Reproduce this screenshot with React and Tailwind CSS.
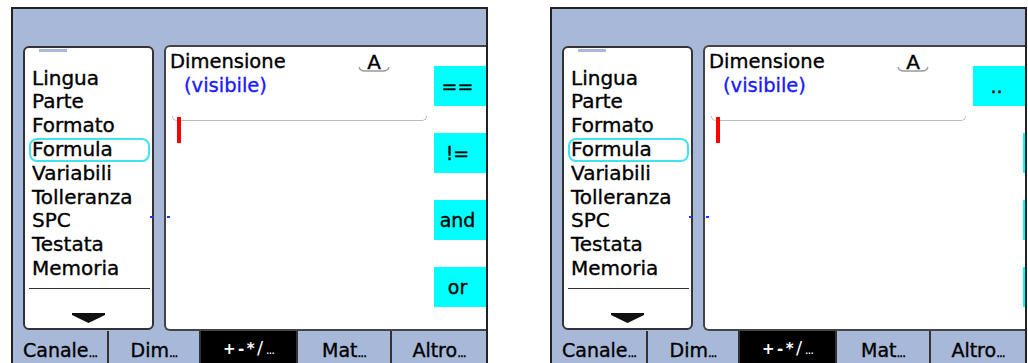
import React from "react";

const FONT = { fontFamily: '"DejaVu Sans", Verdana, sans-serif' };

const MENU = ["Lingua", "Parte", "Formato", "Formula", "Variabili", "Tolleranza", "SPC", "Testata", "Memoria"];

const Tab = ({ label, last }) => (
  <div
    className={`h-full flex justify-center pt-[7px] text-black [-webkit-text-stroke:0.35px_black] ${
      last ? "flex-1" : "border-r-2 border-[#333]"
    }`}
  >
    <span className="text-[19px] leading-[24px]">
      {label}
      <span className="text-[12px] tracking-[-1px]">...</span>
    </span>
  </div>
);

const OpButton = ({ children }) => (
  <div className="w-[52px] h-[40px] bg-[#00ffff] flex items-center justify-center pr-[5px] text-[19px] leading-[24px] text-black [-webkit-text-stroke:0.35px_black]">
    {children}
  </div>
);

const Screen = ({ scrolled }) => (
  <div className="relative w-[477px] h-[370px] border-t-2 border-x-2 border-[#222] bg-[#a8b8d8] flex flex-col shrink-0">
    <div className="h-[36px]" />
    <div className="h-[286px] flex">
      {/* menu list */}
      <div className="ml-[10px] mt-[1px] mb-[1px] w-[131px] bg-white border-2 border-[#333] rounded-[6px] flex flex-col">
        <div className="mt-[1px] ml-[14px] w-[28px] h-[3px] bg-[#a8b8d8]" />
        <div className="mt-[14.7px] flex flex-col">
          {MENU.map((m) => (
            <div
              key={m}
              className={`ml-[4px] w-[121px] h-[23.8px] pl-[1px] border-2 rounded-[8px] text-[20px] leading-[19.8px] text-black [-webkit-text-stroke:0.35px_black] ${
                m === "Formula" ? "border-[#40e4f0]" : "border-transparent"
              }`}
            >
              {m}
            </div>
          ))}
        </div>
        <div className="mt-[7px] ml-[4px] w-[121px] h-[1.5px] bg-[#333]" />
        <div className="mt-[24px] flex justify-center">
          <svg width="33" height="10" viewBox="0 0 33 10">
            <polygon points="0,0 33,0 33,2 16.5,10 0,2" fill="#111" />
          </svg>
        </div>
      </div>
      {/* dimension panel */}
      <div className="ml-[10px] flex-1 bg-white border-y-2 border-l-2 border-[#444] rounded-l-[6px] flex">
        <div className="w-[268px] pt-[3.25px] pl-[4px]">
          <div className="flex text-[19.5px] leading-[24px] text-black [-webkit-text-stroke:0.35px_black]">
            <span className="w-[188px]">Dimensione</span>
            <span className="relative w-[32px] text-center text-[20px]">
              A
              <svg className="absolute left-0 top-[16px]" width="32" height="6" viewBox="0 0 32 6">
                <path d="M1 1 Q2 5 7 5 L25 5 Q30 5 31 1" fill="none" stroke="#999" strokeWidth="1.3" />
              </svg>
            </span>
          </div>
          <div className="ml-[14px] text-[19.5px] leading-[24px] text-[#1a1aff] [-webkit-text-stroke:0.35px_#1a1aff]">
            (visibile)
          </div>
          <div className="relative h-[27px]">
            <div className="ml-[2px] mt-[18px] w-[255px] h-[5px] border-b-[1.5px] border-x-[1.5px] border-[#bbb] rounded-b-[5px]" />
            <div className="absolute left-[7px] top-[1px] w-[4px] h-[26px] bg-[#ff0000]" />
          </div>
        </div>
        <div className="flex-1 flex flex-col items-end pt-[19px] gap-[27px]">
          {scrolled ? (
            <>
              <OpButton>..</OpButton>
              <div className="w-[2px] h-[40px] bg-[#00ffff]" />
              <div className="w-[2px] h-[40px] bg-[#00ffff]" />
              <div className="w-[2px] h-[40px] bg-[#00ffff]" />
            </>
          ) : (
            <>
              <OpButton>==</OpButton>
              <OpButton>!=</OpButton>
              <OpButton>and</OpButton>
              <OpButton>or</OpButton>
            </>
          )}
        </div>
      </div>
    </div>
    {/* tab bar */}
    <div className="h-[34px] flex">
      <div className="w-[96px]"><Tab label="Canale" /></div>
      <div className="w-[92px]"><Tab label="Dim" /></div>
      <div className="w-[97px]">
        <div className="h-full bg-black text-white flex justify-center pt-[8px] border-r-2 border-[#333]">
          <span className="text-[15px] leading-[18px] font-bold tracking-[2.5px]">
            +-*<span className="text-[18px] font-normal">/</span>
            <span className="font-normal tracking-[-1px] text-[12px]">...</span>
          </span>
        </div>
      </div>
      <div className="w-[94px]"><Tab label="Mat" /></div>
      <div className="flex-1"><Tab label="Altro" last /></div>
    </div>
    {/* blue marks */}
    <div className="absolute left-[137px] top-[207px] w-[3px] h-[2px] bg-[#2233ff]" />
    <div className="absolute left-[154px] top-[207px] w-[3px] h-[2px] bg-[#2233ff]" />
  </div>
);

export default function App() {
  return (
    <div className="w-[1028px] h-[363px] overflow-hidden bg-white pt-[7px] pl-[11px] flex gap-[62px]" style={FONT}>
      <Screen />
      <Screen scrolled />
    </div>
  );
}
